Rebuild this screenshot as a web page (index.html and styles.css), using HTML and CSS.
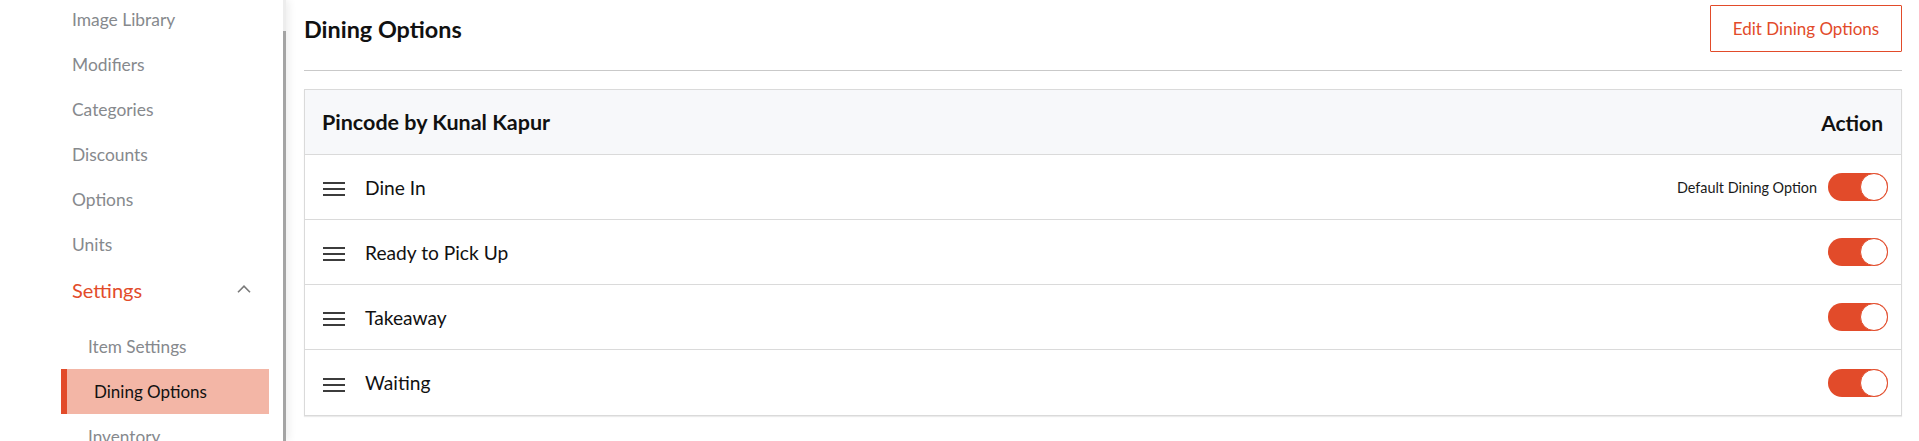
FILE: index.html
```html
<!DOCTYPE html>
<html lang="en">
<head>
<meta charset="utf-8">
<title>Dining Options</title>
<link rel="stylesheet" href="styles.css">
</head>
<body>
<div class="app">
  <aside class="side-wrap">
    <nav class="sidebar">
      <ul class="menu">
        <li class="menu-item">Image Library</li>
        <li class="menu-item">Modifiers</li>
        <li class="menu-item">Categories</li>
        <li class="menu-item">Discounts</li>
        <li class="menu-item">Options</li>
        <li class="menu-item">Units</li>
        <li class="menu-item menu-item--open">
          <span>Settings</span>
          <svg class="chevron" width="14" height="8" viewBox="0 0 14 8"><polyline points="1,7.2 7,1.2 13,7.2" fill="none" stroke="#7a7a7a" stroke-width="1.6"/></svg>
        </li>
      </ul>
      <ul class="submenu">
        <li class="sub-item">Item Settings</li>
        <li class="sub-item sub-item--active">Dining Options</li>
        <li class="sub-item">Inventory</li>
      </ul>
    </nav>
    <div class="scrollbar"><div class="thumb"></div></div>
  </aside>

  <main class="main">
    <header class="page-head">
      <h1 class="page-title">Dining Options</h1>
      <button class="btn-outline">Edit Dining Options</button>
    </header>

    <section class="table">
      <div class="table-head">
        <span class="th-name">Pincode by Kunal Kapur</span>
        <span class="th-action">Action</span>
      </div>
      <div class="row">
        <svg class="drag" width="22" height="20" viewBox="0 0 22 20"><path d="M0 6H22M0 12H22M0 18H22" stroke="#3c3c3c" stroke-width="1.8"/></svg>
        <span class="row-name">Dine In</span>
        <span class="row-note">Default Dining Option</span>
        <span class="toggle"><span class="knob"></span></span>
      </div>
      <div class="row">
        <svg class="drag" width="22" height="20" viewBox="0 0 22 20"><path d="M0 6H22M0 12H22M0 18H22" stroke="#3c3c3c" stroke-width="1.8"/></svg>
        <span class="row-name">Ready to Pick Up</span>
        <span class="toggle"><span class="knob"></span></span>
      </div>
      <div class="row">
        <svg class="drag" width="22" height="20" viewBox="0 0 22 20"><path d="M0 6H22M0 12H22M0 18H22" stroke="#3c3c3c" stroke-width="1.8"/></svg>
        <span class="row-name">Takeaway</span>
        <span class="toggle"><span class="knob"></span></span>
      </div>
      <div class="row">
        <svg class="drag" width="22" height="20" viewBox="0 0 22 20"><path d="M0 6H22M0 12H22M0 18H22" stroke="#3c3c3c" stroke-width="1.8"/></svg>
        <span class="row-name">Waiting</span>
        <span class="toggle"><span class="knob"></span></span>
      </div>
    </section>
  </main>
</div>
</body>
</html>
```

FILE: styles.css
```css
* { box-sizing: border-box; }
html, body { margin: 0; padding: 0; height: 100%; overflow: hidden; background: #fff; }
body { font-family: Lato, "Noto Sans", sans-serif; color: #111; }

.app { display: flex; height: 441px; }

.side-wrap {
  display: flex;
  flex: 0 0 286px;
  position: relative;
  box-shadow: 3px 0 8px rgba(0,0,0,0.07);
  z-index: 1;
}
.sidebar { width: 283px; overflow: hidden; background: #fff; }
.scrollbar { width: 3px; background: #ededed; }
.thumb { margin-top: 31px; height: 420px; background: #a4a4a4; }

.menu, .submenu { list-style: none; margin: 0; padding: 0; }
.menu { margin-top: -3px; }
.menu-item {
  height: 45px;
  display: flex;
  align-items: center;
  padding-left: 72px;
  font-size: 17.4px;
  color: #86898d;
}
.menu-item--open {
  justify-content: space-between;
  padding-right: 32px;
  font-size: 20px;
  color: #e24b2a;
}
.chevron { display: block; margin-top: -2px; }

.submenu { padding-top: 12px; }
.sub-item {
  height: 45px;
  margin-left: 61px;
  width: 208px;
  display: flex;
  align-items: center;
  padding-left: 27px;
  font-size: 17.2px;
  color: #86898d;
}
.sub-item--active {
  background: #f3b6a6;
  border-left: 6px solid #e24b2a;
  padding-left: 27px;
  color: #111;
  font-size: 17px;
}

.main { flex: 1; padding: 0 17px 0 18px; min-width: 0; }

.page-head {
  display: flex;
  align-items: center;
  justify-content: space-between;
  padding-top: 5px;
  padding-bottom: 18px;
  border-bottom: 1px solid #c9c9c9;
}
.page-title { margin: 0; font-size: 23.4px; font-weight: 700; color: #111; }
.btn-outline {
  height: 47px;
  width: 192px;
  background: #fff;
  border: 1px solid #e24b2a;
  border-radius: 1px;
  color: #e24b2a;
  font-family: inherit;
  font-size: 17px;
  padding: 0;
}

.table {
  margin-top: 18px;
  border: 1px solid #dadada;
  box-shadow: 0 1px 1px rgba(0,0,0,0.08);
}
.table-head {
  height: 65px;
  display: flex;
  align-items: center;
  justify-content: space-between;
  padding: 0 18px 0 17px;
  background: #f7f8fa;
  border-bottom: 1px solid #dadada;
  font-size: 21px;
  font-weight: 700;
}
.th-name { font-size: 21.5px; }
.row {
  height: 65px;
  display: flex;
  align-items: center;
  padding: 0 13px 0 18px;
  border-bottom: 1px solid #dadada;
}
.row:last-child { border-bottom: 0; }
.drag { display: block; flex: none; }
.row-name { margin-left: 20px; font-size: 19.2px; color: #111; flex: 1; }
.row-note { font-size: 14.4px; color: #1a1a1a; margin-right: 11px; }

.toggle {
  position: relative;
  width: 60px;
  height: 28px;
  border-radius: 14px;
  background: #e24b2a;
  flex: none;
}
.knob {
  position: absolute;
  right: 0;
  top: 0;
  width: 28px;
  height: 28px;
  border-radius: 50%;
  background: #fff;
  border: 1px solid #e24b2a;
}
```
